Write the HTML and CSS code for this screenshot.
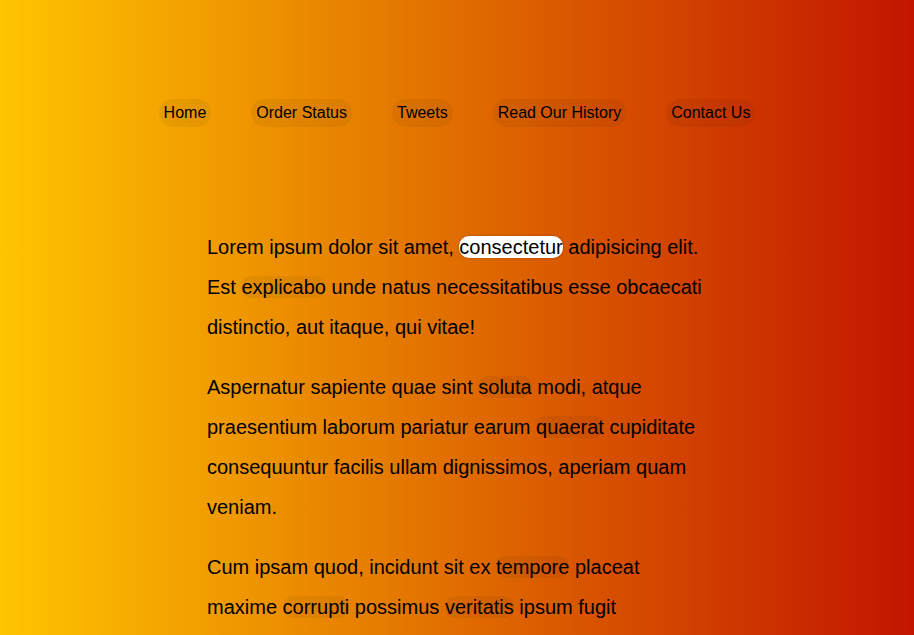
FILE: index.html
```html
<!DOCTYPE html>
<html lang="en">
<head>
<meta charset="utf-8">
<title>Gradient Page</title>
<link rel="stylesheet" href="styles.css">
</head>
<body>
<header class="site-header">
  <nav class="nav">
    <a class="nav-link" href="#">Home</a>
    <a class="nav-link" href="#">Order Status</a>
    <a class="nav-link" href="#">Tweets</a>
    <a class="nav-link" href="#">Read Our History</a>
    <a class="nav-link" href="#">Contact Us</a>
  </nav>
</header>
<main class="content">
  <p class="para">Lorem ipsum dolor sit amet, <a class="word word-active" href="#">consectetur</a> adipisicing elit. Est <a class="word" href="#">explicabo</a> unde natus necessitatibus esse obcaecati distinctio, aut itaque, qui vitae!</p>
  <p class="para">Aspernatur sapiente quae sint <a class="word" href="#">soluta</a> modi, atque praesentium laborum pariatur earum <a class="word" href="#">quaerat</a> cupiditate consequuntur facilis ullam dignissimos, aperiam quam veniam.</p>
  <p class="para">Cum ipsam quod, incidunt sit ex <a class="word" href="#">tempore</a> placeat maxime <a class="word" href="#">corrupti</a> possimus <a class="word" href="#">veritatis</a> ipsum fugit laudantium eveniet, nobis deleniti rem.</p>
</main>
</body>
</html>
```

FILE: styles.css
```css
html, body {
  margin: 0;
  padding: 0;
}

body {
  min-height: 100vh;
  background: linear-gradient(to right, #ffc500, #c21500);
  font-family: "Liberation Sans", Arial, sans-serif;
  color: #000;
}

.site-header {
  padding-top: 99px;
}

.nav {
  display: flex;
  justify-content: center;
  gap: 40px;
}

.nav-link {
  display: block;
  padding: 5px;
  font-size: 16px;
  line-height: 18px;
  color: #000;
  text-decoration: none;
  background: rgba(0, 0, 0, 0.05);
  border-radius: 14px;
}

.content {
  width: 500px;
  margin: 0 auto;
  padding-top: 80px;
}

.para {
  margin: 20px 0;
  font-size: 20px;
  line-height: 40px;
}

.word {
  color: #000;
  text-decoration: none;
  background: rgba(0, 0, 0, 0.05);
  border-radius: 10px;
}

.word-active {
  background: #fff;
  box-shadow: 0 0 3px rgba(0, 0, 0, 0.25);
}
```
